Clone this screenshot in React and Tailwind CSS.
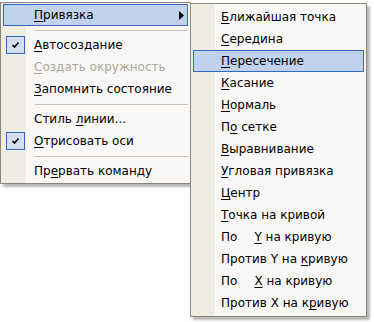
import React from 'react';

const font = { fontFamily: '"DejaVu Sans", Verdana, sans-serif' };

// подчёркнутая буква-мнемоника
function U({ children }) {
  return <span className="underline underline-offset-[2px] decoration-1">{children}</span>;
}

function Check() {
  return (
    <svg width="9" height="8" viewBox="0 0 9 8" className="block">
      <path d="M1.5 4 L3.5 6 L7.5 1.5" stroke="#000" strokeWidth="1.6" fill="none" />
    </svg>
  );
}

function Row({ children, active, checked, disabled, arrow, pl }) {
  return (
    <div
      className={`relative mx-[2px] h-[22px] flex items-center border whitespace-nowrap ${
        active ? 'border-[#316AC5] bg-[#C1D2EE]' : 'border-transparent'
      } ${disabled ? 'text-[#ACA899]' : 'text-black'}`}
      style={{ paddingLeft: pl }}
    >
      {checked && (
        <div className="absolute left-[2px] top-[1px] w-[19px] h-[18px] border border-[#316AC5] bg-[#D5DEF0] flex items-center justify-center">
          <Check />
        </div>
      )}
      <span className="flex-1">{children}</span>
      {arrow && (
        <svg width="5" height="9" viewBox="0 0 5 9" className="mr-[3px]">
          <polygon points="0,0 5,4.5 0,9" fill="#000" />
        </svg>
      )}
    </div>
  );
}

function Sep() {
  return (
    <div className="h-[8px] flex items-center pl-[34px] pr-[2px]">
      <div className="h-px w-full bg-[#C5C2B8]" />
    </div>
  );
}

const subItems = [
  [<><U>Б</U>лижайшая точка</>],
  [<><U>С</U>ередина</>],
  [<><U>П</U>ересечение</>, true],
  [<><U>К</U>асание</>],
  [<><U>Н</U>ормаль</>],
  [<>П<U>о</U> сетке</>],
  [<><U>В</U>ыравнивание</>],
  [<><U>У</U>гловая привязка</>],
  [<><U>Ц</U>ентр</>],
  [<><U>Т</U>очка на кривой</>],
  [<>По<span className="inline-block w-[17px]" /><U>Y</U> на кривую</>],
  [<>Против Y на <U>к</U>ривую</>],
  [<>По<span className="inline-block w-[17px]" /><U>X</U> на кривую</>],
  [<>Против X на к<U>р</U>ивую</>],
];

export default function App() {
  return (
    <div className="relative w-[374px] h-[322px] bg-white overflow-hidden text-[12px] leading-none" style={font}>
      {/* основное меню */}
      <div className="absolute left-0 top-[2px] w-[191px] border border-[#8A867A] py-px bg-[linear-gradient(to_right,#EFEDE3_0,#EFEDE3_25px,#F9F8F7_25px)] shadow-[3px_3px_2px_rgba(0,0,0,0.28)]">
        <Row active arrow pl={30}><U>П</U>ривязка</Row>
        <Sep />
        <Row checked pl={30}><U>А</U>втосоздание</Row>
        <Row disabled pl={30}><U>С</U>оздать окружность</Row>
        <Row pl={30}><U>З</U>апомнить состояние</Row>
        <Sep />
        <Row pl={30}>Стиль <U>л</U>инии...</Row>
        <Row checked pl={30}><U>О</U>трисовать оси</Row>
        <Sep />
        <Row pl={30}>Пр<U>е</U>рвать команду</Row>
      </div>

      {/* подменю привязок */}
      <div className="absolute left-[190px] top-[3px] w-[177px] border border-[#8A867A] py-[2px] bg-[linear-gradient(to_right,#EFEDE3_0,#EFEDE3_24px,#F9F8F7_24px)] shadow-[3px_3px_2px_rgba(0,0,0,0.28)]">
        {subItems.map(([label, active], i) => (
          <Row key={i} active={active} pl={27}>{label}</Row>
        ))}
      </div>
    </div>
  );
}
